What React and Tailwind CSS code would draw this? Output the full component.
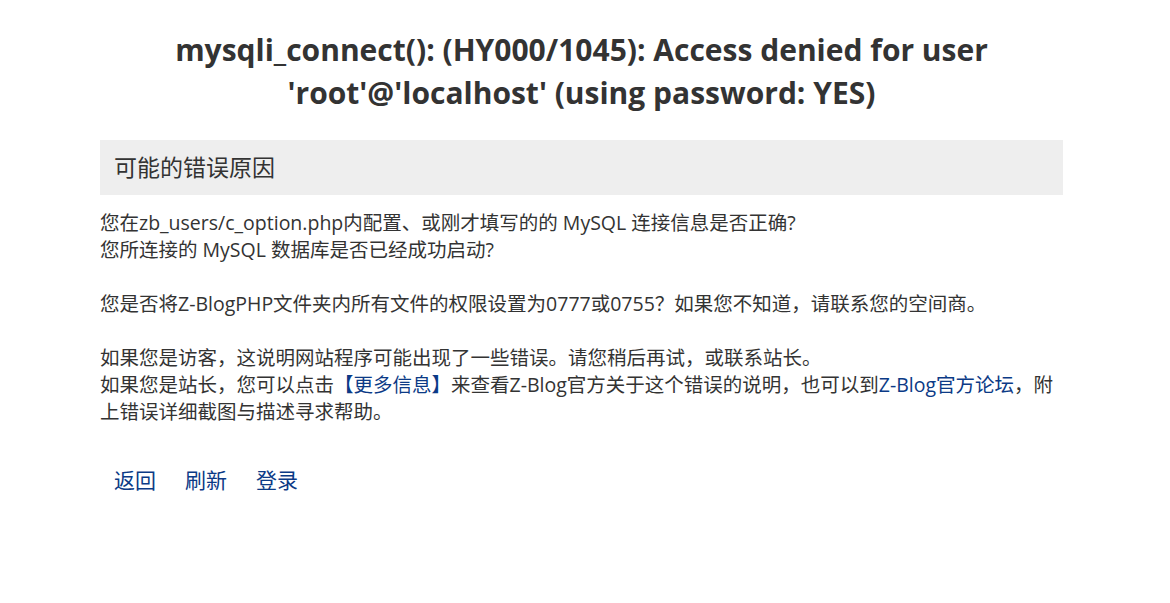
export default function App() {
  const font = { fontFamily: '"Open Sans", "Noto Sans CJK SC", sans-serif' };
  return (
    <div className="min-h-[603px] bg-white text-[#333]" style={font}>
      <div className="ml-[100px] w-[963px] pt-[28px]">
        <h1 className="text-center text-[30px] font-bold leading-[43px] text-[#333] px-[40px]">
          mysqli_connect(): (HY000/1045): Access denied for user 'root'@'localhost' (using password: YES)
        </h1>
        <div className="mt-[26px] bg-[#eeeeee] h-[55px] flex items-center px-[14px] text-[23px] text-[#333]">
          可能的错误原因
        </div>
        <div className="mt-[14px] text-[19.5px] leading-[27px] text-[#333]">
          <p>您在zb_users/c_option.php内配置、或刚才填写的的 MySQL 连接信息是否正确?</p>
          <p>您所连接的 MySQL 数据库是否已经成功启动?</p>
          <p className="mt-[27px]">您是否将Z-BlogPHP文件夹内所有文件的权限设置为0777或0755？如果您不知道，请联系您的空间商。</p>
          <p className="mt-[27px]">如果您是访客，这说明网站程序可能出现了一些错误。请您稍后再试，或联系站长。</p>
          <p>
            如果您是站长，您可以点击<a className="text-[#0b3a86]">【更多信息】</a>来查看Z-Blog官方关于这个错误的说明，也可以到<a className="text-[#0b3a86]">Z-Blog官方论坛</a>，附上错误详细截图与描述寻求帮助。
          </p>
        </div>
        <div className="mt-[40px] flex gap-[29px] px-[14px] text-[21px] text-[#0b3a86]">
          <a>返回</a>
          <a>刷新</a>
          <a>登录</a>
        </div>
      </div>
    </div>
  );
}
